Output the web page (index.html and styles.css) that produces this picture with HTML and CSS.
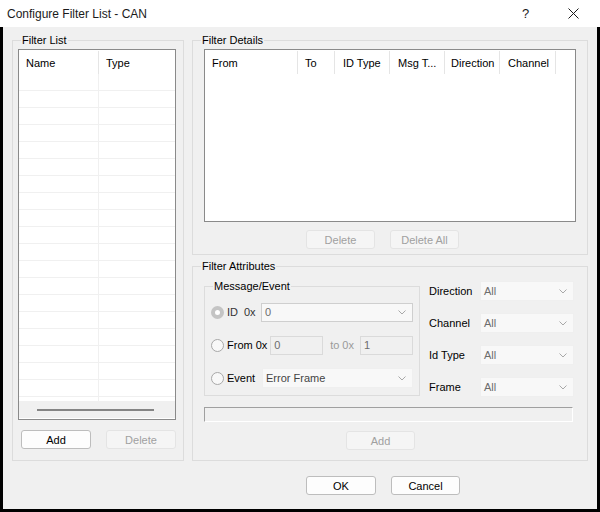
FILE: index.html
```html
<!DOCTYPE html>
<html>
<head>
  <title>Configure Filter List - CAN</title>
  <meta name="viewport" content="width=device-width, initial-scale=1.0">
  <link rel="stylesheet" href="styles.css">
</head>
<body>
  <div class="titlebar">
    <span class="title">Configure Filter List - CAN</span>
    <span class="help">?</span>
    <span class="close">
      <svg width="11" height="11" viewBox="0 0 11 11"><path d="M0.5 0.5 L10.5 10.5 M10.5 0.5 L0.5 10.5" stroke="#1a1a1a" stroke-width="1" fill="none"/></svg>
    </span>
  </div>
  <div class="frame">
    <div class="dialog">
      <div class="groups">
        <fieldset class="group filter-list">
          <legend>Filter List</legend>
          <div class="list-wrap">
            <div class="listbox">
              <div class="list-head">
                <div class="hcell name-col">Name</div>
                <div class="hcell">Type</div>
              </div>
              <div class="list-rows">
                <div class="row"><div class="cell name-col"></div><div class="cell"></div></div>
                <div class="row"><div class="cell name-col"></div><div class="cell"></div></div>
                <div class="row"><div class="cell name-col"></div><div class="cell"></div></div>
                <div class="row"><div class="cell name-col"></div><div class="cell"></div></div>
                <div class="row"><div class="cell name-col"></div><div class="cell"></div></div>
                <div class="row"><div class="cell name-col"></div><div class="cell"></div></div>
                <div class="row"><div class="cell name-col"></div><div class="cell"></div></div>
                <div class="row"><div class="cell name-col"></div><div class="cell"></div></div>
                <div class="row"><div class="cell name-col"></div><div class="cell"></div></div>
                <div class="row"><div class="cell name-col"></div><div class="cell"></div></div>
                <div class="row"><div class="cell name-col"></div><div class="cell"></div></div>
                <div class="row"><div class="cell name-col"></div><div class="cell"></div></div>
                <div class="row"><div class="cell name-col"></div><div class="cell"></div></div>
                <div class="row"><div class="cell name-col"></div><div class="cell"></div></div>
                <div class="row"><div class="cell name-col"></div><div class="cell"></div></div>
                <div class="row"><div class="cell name-col"></div><div class="cell"></div></div>
                <div class="row"><div class="cell name-col"></div><div class="cell"></div></div>
                <div class="row"><div class="cell name-col"></div><div class="cell"></div></div>
                <div class="row"><div class="cell name-col"></div><div class="cell"></div></div>
                <div class="row"><div class="cell name-col"></div><div class="cell"></div></div>
              </div>
              <div class="hscroll"><div class="thumb"></div></div>
            </div>
            <div class="btn-row left-btns">
              <button class="btn">Add</button>
              <button class="btn" disabled>Delete</button>
            </div>
          </div>
        </fieldset>

        <div class="right-col">
          <fieldset class="group details">
            <legend>Filter Details</legend>
            <div class="details-wrap">
              <div class="listbox details-list">
                <div class="list-head">
                  <div class="hcell c-from">From</div>
                  <div class="hcell c-to">To</div>
                  <div class="hcell c-mid">ID Type</div>
                  <div class="hcell c-mid">Msg T...</div>
                  <div class="hcell c-dir">Direction</div>
                  <div class="hcell c-chan">Channel</div>
                </div>
              </div>
              <div class="btn-row detail-btns">
                <button class="btn" disabled>Delete</button>
                <button class="btn" disabled>Delete All</button>
              </div>
            </div>
          </fieldset>

          <fieldset class="group attrs">
            <legend>Filter Attributes</legend>
            <div class="attrs-wrap">
              <div class="attrs-top">
                <fieldset class="group msg">
                  <legend>Message/Event</legend>
                  <div class="msg-rows">
                    <div class="msg-row">
                      <span class="radio checked"></span>
                      <span class="lbl dim">ID</span>
                      <span class="lbl dim ox">0x</span>
                      <div class="combo id-combo"><span>0</span>
                        <svg width="8" height="5" viewBox="0 0 8 5"><polyline points="0.5,0.5 4,4 7.5,0.5" fill="none" stroke="#a8a8a8"/></svg>
                      </div>
                    </div>
                    <div class="msg-row">
                      <span class="radio"></span>
                      <span class="lbl">From 0x</span>
                      <div class="field from-field">0</div>
                      <span class="lbl faint to-lbl">to 0x</span>
                      <div class="field">1</div>
                    </div>
                    <div class="msg-row">
                      <span class="radio"></span>
                      <span class="lbl">Event</span>
                      <div class="combo event-combo"><span>Error Frame</span>
                        <svg width="8" height="5" viewBox="0 0 8 5"><polyline points="0.5,0.5 4,4 7.5,0.5" fill="none" stroke="#a8a8a8"/></svg>
                      </div>
                    </div>
                  </div>
                </fieldset>

                <div class="attr-grid">
                  <span class="lbl">Direction</span>
                  <div class="combo"><span>All</span>
                    <svg width="8" height="5" viewBox="0 0 8 5"><polyline points="0.5,0.5 4,4 7.5,0.5" fill="none" stroke="#a8a8a8"/></svg>
                  </div>
                  <span class="lbl">Channel</span>
                  <div class="combo"><span>All</span>
                    <svg width="8" height="5" viewBox="0 0 8 5"><polyline points="0.5,0.5 4,4 7.5,0.5" fill="none" stroke="#a8a8a8"/></svg>
                  </div>
                  <span class="lbl">Id Type</span>
                  <div class="combo"><span>All</span>
                    <svg width="8" height="5" viewBox="0 0 8 5"><polyline points="0.5,0.5 4,4 7.5,0.5" fill="none" stroke="#a8a8a8"/></svg>
                  </div>
                  <span class="lbl">Frame</span>
                  <div class="combo"><span>All</span>
                    <svg width="8" height="5" viewBox="0 0 8 5"><polyline points="0.5,0.5 4,4 7.5,0.5" fill="none" stroke="#a8a8a8"/></svg>
                  </div>
                </div>
              </div>
              <div class="status-bar"></div>
              <button class="btn add-attr" disabled>Add</button>
            </div>
          </fieldset>
        </div>
      </div>

      <div class="footer">
        <button class="btn">OK</button>
        <button class="btn">Cancel</button>
      </div>
    </div>
  </div>
</body>
</html>
```

FILE: styles.css
```css
* {
  box-sizing: border-box;
}
body {
  margin: 0;
  width: 600px;
  height: 512px;
  overflow: hidden;
  background-color: #000;
  font-family: "Liberation Sans", Arial, sans-serif;
  font-size: 11px;
  color: #000;
}
.titlebar {
  height: 27px;
  background-color: #fff;
  display: flex;
  align-items: center;
  padding-left: 7px;
  font-size: 12px;
  color: #1a1a1a;
}
.title {
  flex: 1;
}
.help {
  width: 20px;
  margin-right: 26px;
  font-size: 13px;
}
.close {
  width: 11px;
  height: 11px;
  margin-right: 21px;
  display: flex;
}
.frame {
  padding: 0 3px 3px;
}
.dialog {
  height: 482px;
  background-color: #f0f0f0;
  padding: 7px 9px 0;
}
.groups {
  display: grid;
  grid-template-columns: 172px 396px;
  column-gap: 8px;
  height: 427px;
}
.right-col {
  display: flex;
  flex-direction: column;
  gap: 5px;
}

/* group boxes */
fieldset.group {
  margin: 0;
  padding: 0;
  min-width: 0;
  border: 1px solid #dcdcdc;
}
fieldset.group legend {
  margin-left: 8px;
  padding: 0 1px;
  height: 12px;
  line-height: 12px;
}
.details {
  height: 221px;
}
.attrs {
  height: 201px;
}

/* list boxes */
.listbox {
  background-color: #fff;
  border: 1px solid #8a8a8a;
  display: flex;
  flex-direction: column;
}
.list-head {
  display: flex;
  height: 24px;
  padding-top: 1px;
  flex: none;
}
.hcell {
  padding-left: 7px;
  border-right: 1px solid #e5e5e5;
  display: flex;
  align-items: center;
}
.list-wrap {
  padding: 3px 7px 0 5px;
}
.filter-list .listbox {
  height: 371px;
}
.name-col {
  width: 80px;
  flex: none;
}
.filter-list .hcell:last-child {
  border-right: none;
}
.list-rows {
  height: 327px;
  overflow: hidden;
  display: flex;
  flex-direction: column;
  flex: none;
}
.row {
  display: flex;
  height: 17px;
  flex: none;
  border-bottom: 1px solid #f0f0f0;
}
.cell {
  flex: 1;
}
.cell.name-col {
  flex: none;
  border-right: 1px solid #f0f0f0;
}
.hscroll {
  height: 17px;
  background-color: #f0f0f0;
  padding: 8px 0 0 18px;
}
.thumb {
  width: 117px;
  height: 2px;
  background-color: #858585;
}

.details-wrap {
  padding: 3px 11px 0;
}
.details-list {
  height: 173px;
}
.c-from { width: 93px; }
.c-to { width: 37px; }
.c-mid { width: 55px; padding-left: 8px; }
.c-dir { width: 55px; padding-left: 6px; }
.c-chan { width: 56px; padding-left: 8px; }

/* buttons */
.btn {
  width: 70px;
  height: 19px;
  padding: 0;
  font-family: "Liberation Sans", Arial, sans-serif;
  font-size: 11px;
  color: #000;
  background-color: #fdfdfd;
  border: 1px solid #bdbdbd;
  border-radius: 3px;
}
.btn:disabled {
  color: #a0a0a0;
  background-color: #f5f5f5;
  border-color: #e4e4e4;
}
.btn-row {
  display: flex;
  gap: 15px;
}
.left-btns {
  margin-top: 10px;
  padding-left: 3px;
}
.detail-btns {
  margin-top: 8px;
  padding-left: 102px;
}
.detail-btns .btn {
  width: 69px;
}

/* filter attributes */
.attrs-wrap {
  padding: 8px 0 0 11px;
}
.attrs-top {
  display: flex;
}
.msg {
  width: 216px;
  height: 116px;
  margin-left: 2px;
}
.msg-rows {
  display: grid;
  grid-auto-rows: 20px;
  row-gap: 13px;
  padding: 10px 6px 0 6px;
}
.msg-row {
  display: flex;
  align-items: center;
}
.radio {
  width: 13px;
  height: 13px;
  border-radius: 50%;
  border: 1px solid #a8a8a8;
  background-color: #f8f8f8;
  margin-right: 3px;
  flex: none;
}
.radio.checked {
  border: 4px solid #c4c4c4;
  background-color: #fff;
}
.lbl {
  white-space: nowrap;
}
.dim {
  color: #333;
}
.ox {
  margin-left: 6px;
}
.faint {
  color: #9a9a9a;
}
.to-lbl {
  margin: 0 6px 0 7px;
}
.combo {
  height: 20px;
  display: flex;
  align-items: center;
  justify-content: space-between;
  padding: 0 6px 0 3px;
  background-color: #f8f8f8;
  border: 1px solid #efefef;
  color: #6d6d6d;
}
.id-combo {
  width: 152px;
  margin-left: auto;
  border-color: #cfcfcf;
  height: 19px;
}
.event-combo {
  width: 151px;
  margin-left: auto;
  color: #444;
}
.field {
  width: 53px;
  height: 19px;
  padding-left: 3px;
  line-height: 17px;
  border: 1px solid #dadada;
  color: #6d6d6d;
}
.from-field {
  margin-left: auto;
}
.attr-grid {
  display: grid;
  grid-template-columns: 51px 94px;
  grid-auto-rows: 20px;
  row-gap: 12px;
  align-items: center;
  margin: 1px 0 0 9px;
}
.status-bar {
  width: 369px;
  height: 15px;
  margin-top: 10px;
  border-top: 1px solid #a0a0a0;
  border-left: 1px solid #a0a0a0;
  border-right: 1px solid #fff;
  border-bottom: 1px solid #fff;
}
.add-attr {
  display: block;
  margin: 9px 0 0 142px;
  width: 69px;
}

.footer {
  display: flex;
  gap: 15px;
  margin-top: 15px;
  padding-left: 294px;
}
.footer .btn:last-child {
  width: 69px;
}
```
